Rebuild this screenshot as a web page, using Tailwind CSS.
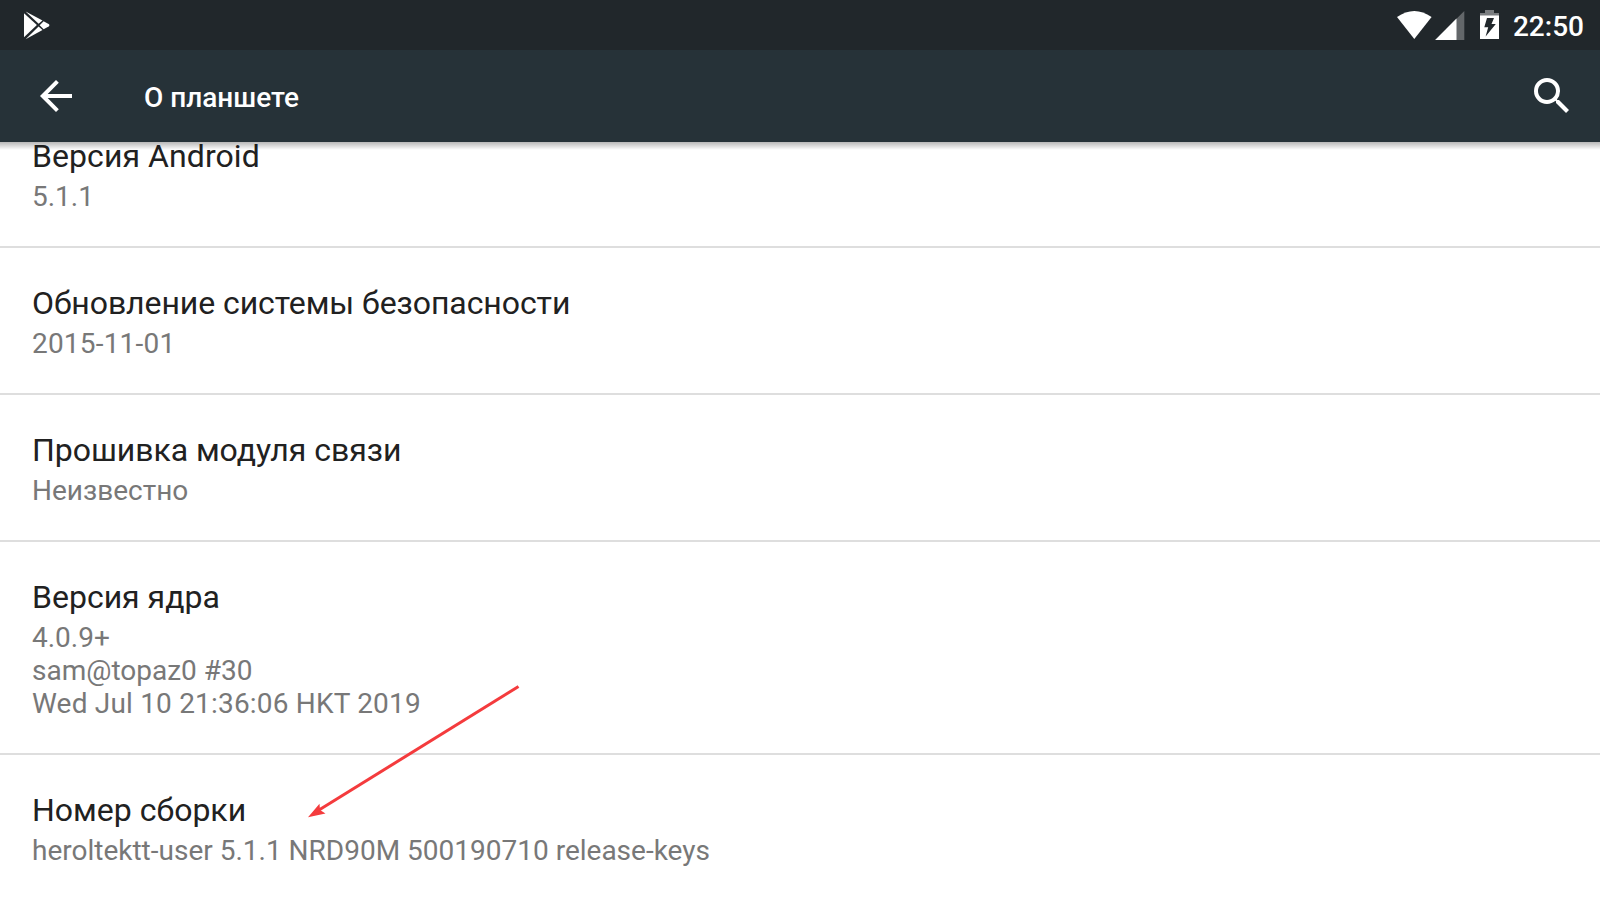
<!DOCTYPE html>
<html lang="ru">
<head>
<meta charset="utf-8">
<title>О планшете</title>
<script src="https://cdn.jsdelivr.net/npm/@tailwindcss/browser@4"></script>
</head>
<body class="relative flex h-[900px] w-[1600px] flex-col overflow-hidden bg-white font-['Roboto',sans-serif] text-[#212121]">
  <div class="z-10 flex h-[50px] shrink-0 items-start justify-between bg-[#21272b] pl-6 pr-4 text-white">
    <svg class="mt-[11px] h-[29px] w-[26px]" viewBox="0 0 26 29" fill="#fff">
      <path d="M0 2.2V26.2L12.9 14.1Z"/>
      <path d="M1.6.4 18.5 9.5 14.6 12.8Z"/>
      <path d="M1.6 28.2 18.5 19 14.6 15.6Z"/>
      <path d="M19.6 10.2 24.6 13Q26.2 14.2 24.6 15.6L19.6 18.3 15.6 14.2Z"/>
    </svg>
    <div class="flex items-start">
      <svg class="mt-[11px] h-[29px] w-[35px]" viewBox="0 0 35 29" fill="#fff"><path d="M0 6Q17.3-6 34.6 6L17.3 28Z"/></svg>
      <svg class="ml-[3px] mt-[11px] h-[29px] w-[30px]" viewBox="0 0 30 29"><path d="M29.3 0V29H0Z" fill="#63676a"/><path d="M21.5 7.6V29H.2Z" fill="#fff"/></svg>
      <svg class="ml-[15px] mt-[10px] h-[29px] w-[19px]" viewBox="0 0 19 29"><path d="M5 0H14V3H19V6H0V3H5Z" fill="#7a7d80"/><path d="M0 5.5H19V29H0ZM7 8 4.3 17.2H8.2L5.6 26.4 15.8 14H11.5L14 8Z" fill="#fff" fill-rule="evenodd"/></svg>
      <span class="ml-[14px] mt-[10px] text-[28px] font-medium leading-[33px]">22:50</span>
    </div>
  </div>
  <header class="z-10 flex h-[92px] shrink-0 items-center bg-[#263238] pl-10 pr-[31px] text-white">
    <svg class="h-8 w-8" viewBox="0 0 32 32" fill="#fff"><path d="M32 14H7.7L18.8 2.8 16 0 0 16 16 32 18.8 29.2 7.7 18H32Z"/></svg>
    <h1 class="ml-[72px] mt-[3px] grow text-[28px] font-medium leading-[33px]">О планшете</h1>
    <svg class="mb-[2px] h-[35px] w-[35px]" viewBox="3 3 17.49 17.49" fill="#fff"><path d="M15.5 14h-.79l-.28-.27A6.471 6.471 0 0 0 16 9.5 6.5 6.5 0 1 0 9.5 16c1.61 0 3.09-.59 4.23-1.57l.27.28v.79l5 4.99L20.49 19l-4.99-5zm-6 0C7.01 14 5 11.99 5 9.5S7.01 5 9.5 5 14 7.01 14 9.5 11.99 14 9.5 14z"/></svg>
  </header>
  <div class="z-10 -mb-2 h-2 shrink-0 bg-linear-to-b from-black/28 to-black/0"></div>
  <main class="-mt-[41px] flex flex-col divide-y-2 divide-[#dedede] text-[28px] leading-[33px] text-[#787878]">
    <section class="h-[147px] px-8 pt-9">
      <h2 class="mb-[5px] text-[32px] leading-[38px] tracking-[0.07px] text-[#212121]">Версия Android</h2>
      <p>5.1.1</p>
    </section>
    <section class="h-[147px] px-8 pt-9">
      <h2 class="mb-[5px] text-[32px] leading-[38px] tracking-[-0.07px] text-[#212121]">Обновление системы безопасности</h2>
      <p class="tracking-[0.2px]">2015-11-01</p>
    </section>
    <section class="h-[147px] px-8 pt-9">
      <h2 class="mb-[5px] text-[32px] leading-[38px] tracking-[-0.05px] text-[#212121]">Прошивка модуля связи</h2>
      <p>Неизвестно</p>
    </section>
    <section class="h-[213px] px-8 pt-9">
      <h2 class="mb-[5px] text-[32px] leading-[38px] text-[#212121]">Версия ядра</h2>
      <p>4.0.9+<br>sam@topaz0 #30<br><span class="tracking-[0.19px]">Wed Jul 10 21:36:06 HKT 2019</span></p>
    </section>
    <section class="h-[147px] px-8 pt-9">
      <h2 class="mb-[5px] text-[32px] leading-[38px] text-[#212121]">Номер сборки</h2>
      <p>heroltektt-user 5.1.1 NRD90M 500190710 release-keys</p>
    </section>
  </main>
  <svg class="absolute left-[300px] top-[680px] h-[145px] w-[225px]" viewBox="300 680 225 145"><path d="M518.5 686.5 319 810" stroke="#f43b3d" stroke-width="3" fill="none"/><path d="M308 817.3 319.5 803.8 320 810 325.5 813.5Z" fill="#f43b3d"/></svg>
</body>
</html>
